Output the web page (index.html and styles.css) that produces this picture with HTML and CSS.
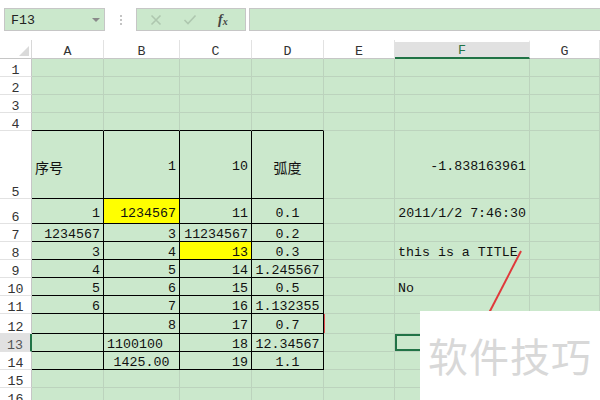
FILE: index.html
```html
<!DOCTYPE html>
<html lang="zh">
<head>
<meta charset="utf-8">
<title>Sheet</title>
<link rel="stylesheet" href="styles.css">
</head>
<body>
<div class="app">
  <div class="fbar">
    <div class="namebox"><span class="nb-text">F13</span><span class="nb-arrow"></span></div>
    <div class="sep"><i></i><i></i><i></i></div>
    <div class="fxbox">
      <svg class="ico" width="12" height="12" viewBox="0 0 12 12"><path d="M1.5 1.5 L10.5 10.5 M10.5 1.5 L1.5 10.5" stroke="#aec7af" stroke-width="1.6" fill="none"/></svg>
      <svg class="ico" width="14" height="12" viewBox="0 0 14 12"><path d="M1.5 6 L5 9.5 L12.5 1.5" stroke="#aec7af" stroke-width="1.6" fill="none"/></svg>
      <span class="fx">f<sub>x</sub></span>
    </div>
    <div class="input"></div>
  </div>

  <div class="sheet">
    <!-- header row -->
    <div class="corner"><span class="tri"></span></div>
    <div class="ch">A</div><div class="ch">B</div><div class="ch">C</div><div class="ch">D</div><div class="ch">E</div><div class="ch sel">F</div><div class="ch">G</div>

    <!-- 1-3 -->
    <div class="rh">1</div><div class="c"></div><div class="c"></div><div class="c"></div><div class="c"></div><div class="c"></div><div class="c"></div><div class="c"></div>
    <div class="rh">2</div><div class="c"></div><div class="c"></div><div class="c"></div><div class="c"></div><div class="c"></div><div class="c"></div><div class="c"></div>
    <div class="rh">3</div><div class="c"></div><div class="c"></div><div class="c"></div><div class="c"></div><div class="c"></div><div class="c"></div><div class="c"></div>
    <!-- 4 -->
    <div class="rh">4</div><div class="c bb"></div><div class="c bb"></div><div class="c bb"></div><div class="c bb"></div><div class="c"></div><div class="c"></div><div class="c"></div>
    <!-- 5 -->
    <div class="rh">5</div>
    <div class="c t cjk">序号</div>
    <div class="c t r">1</div>
    <div class="c t r">10</div>
    <div class="c t ctr cjk">弧度</div>
    <div class="c"></div>
    <div class="c r">-1.838163961</div>
    <div class="c"></div>
    <!-- 6 -->
    <div class="rh">6</div>
    <div class="c t r">1</div>
    <div class="c t r yel">1234567</div>
    <div class="c t r">11</div>
    <div class="c t ctr">0.1</div>
    <div class="c"></div>
    <div class="c r">2011/1/2 7:46:30</div>
    <div class="c"></div>
    <!-- 7 -->
    <div class="rh">7</div>
    <div class="c t r">1234567</div>
    <div class="c t r">3</div>
    <div class="c t r">11234567</div>
    <div class="c t ctr">0.2</div>
    <div class="c"></div><div class="c"></div><div class="c"></div>
    <!-- 8 -->
    <div class="rh">8</div>
    <div class="c t r">3</div>
    <div class="c t r">4</div>
    <div class="c t r yel">13</div>
    <div class="c t ctr">0.3</div>
    <div class="c"></div>
    <div class="c">this is a TITLE</div>
    <div class="c"></div>
    <!-- 9 -->
    <div class="rh">9</div>
    <div class="c t r">4</div>
    <div class="c t r">5</div>
    <div class="c t r">14</div>
    <div class="c t ctr">1.245567</div>
    <div class="c"></div><div class="c"></div><div class="c"></div>
    <!-- 10 -->
    <div class="rh">10</div>
    <div class="c t r">5</div>
    <div class="c t r">6</div>
    <div class="c t r">15</div>
    <div class="c t ctr">0.5</div>
    <div class="c"></div>
    <div class="c">No</div>
    <div class="c"></div>
    <!-- 11 -->
    <div class="rh">11</div>
    <div class="c t r">6</div>
    <div class="c t r">7</div>
    <div class="c t r">16</div>
    <div class="c t ctr">1.132355</div>
    <div class="c"></div><div class="c"></div><div class="c"></div>
    <!-- 12 -->
    <div class="rh">12</div>
    <div class="c t r"></div>
    <div class="c t r">8</div>
    <div class="c t r">17</div>
    <div class="c t ctr">0.7</div>
    <div class="c redl"></div><div class="c"></div><div class="c"></div>
    <!-- 13 -->
    <div class="rh act">13</div>
    <div class="c t"></div>
    <div class="c t">1100100</div>
    <div class="c t r">18</div>
    <div class="c t ctr">12.34567</div>
    <div class="c"></div>
    <div class="c active"></div>
    <div class="c"></div>
    <!-- 14 -->
    <div class="rh">14</div>
    <div class="c t"></div>
    <div class="c t ctr">1425.00</div>
    <div class="c t r">19</div>
    <div class="c t ctr">1.1</div>
    <div class="c"></div><div class="c"></div><div class="c"></div>
    <!-- 15, 16 -->
    <div class="rh">15</div><div class="c"></div><div class="c"></div><div class="c"></div><div class="c"></div><div class="c"></div><div class="c"></div><div class="c"></div>
    <div class="rh">16</div><div class="c"></div><div class="c"></div><div class="c"></div><div class="c"></div><div class="c"></div><div class="c"></div><div class="c"></div>
  </div>

  <svg class="arrow" width="600" height="400" viewBox="0 0 600 400"><line x1="521" y1="251" x2="489" y2="313" stroke="#e0393b" stroke-width="2"/></svg>

  <div class="watermark cjk">软件技巧</div>
</div>
</body>
</html>
```

FILE: styles.css
```css
html, body {
  margin: 0;
  padding: 0;
  background: #ffffff;
}
body {
  width: 600px;
  height: 400px;
  overflow: hidden;
  font-family: "Liberation Mono", "DejaVu Sans Mono", monospace;
  font-size: 13.3px;
  color: #111;
}
.app {
  position: relative;
  width: 600px;
  height: 400px;
  overflow: hidden;
}
.cjk {
  font-family: "Noto Sans CJK SC", "Noto Sans", sans-serif;
}

/* formula bar */
.fbar {
  height: 40px;
  box-sizing: border-box;
  padding: 8px 0 0 4px;
  display: flex;
  align-items: flex-start;
}
.namebox {
  width: 101px;
  height: 23px;
  box-sizing: border-box;
  border: 1px solid #c6c6c6;
  background: #cbe8cc;
  display: flex;
  align-items: center;
  justify-content: space-between;
  padding: 1px 4px 0 6px;
}
.nb-text {
  color: #222;
  font-size: 13.3px;
}
.nb-arrow {
  width: 0;
  height: 0;
  border-left: 4px solid transparent;
  border-right: 4px solid transparent;
  border-top: 4px solid #8a8a8a;
}
.sep {
  width: 31px;
  height: 23px;
  display: flex;
  flex-direction: column;
  align-items: center;
  justify-content: center;
  gap: 2px;
}
.sep i {
  display: block;
  width: 2px;
  height: 2px;
  background: #c4c4c4;
}
.fxbox {
  width: 110px;
  height: 23px;
  box-sizing: border-box;
  border: 1px solid #c6c6c6;
  background: #cbe8cc;
  display: flex;
  align-items: center;
  padding-left: 13px;
}
.ico {
  display: block;
}
.ico + .ico {
  margin-left: 21px;
}
.fx {
  margin-left: 21px;
  font-family: "Liberation Serif", serif;
  font-style: italic;
  font-weight: bold;
  font-size: 14px;
  color: #444;
}
.fx sub {
  font-size: 10px;
  vertical-align: -1px;
}
.input {
  flex: 1;
  margin-left: 3px;
  height: 23px;
  box-sizing: border-box;
  border: 1px solid #c6c6c6;
  border-right: none;
  background: #cbe8cc;
}

/* sheet */
.sheet {
  display: grid;
  grid-template-columns: 32px 72px 76px 72px 72px 71px 135px 70px;
  grid-template-rows: 19px 18px 18px 18px 18px 68px 25px 18px 18px 18px 18px 18px 20px 18px 18px 18px 18px;
}
.corner {
  position: relative;
  background: #fff;
  border-bottom: 1px solid #c6c6c6;
  border-right: 1px solid #d8d8d8;
}
.tri {
  position: absolute;
  right: 2px;
  bottom: 2px;
  width: 0;
  height: 0;
  border-left: 10px solid transparent;
  border-bottom: 10px solid #dadada;
}
.ch {
  background: #fff;
  border-bottom: 1px solid #c6c6c6;
  border-right: 1px solid #e2e2e2;
  box-sizing: border-box;
  display: flex;
  align-items: center;
  justify-content: center;
  color: #333;
  padding-top: 5px;
}
.ch.sel {
  background: #e1e1e1;
  border-top: 2px solid #fff;
  border-bottom: 2px solid #217346;
  color: #217346;
  padding-top: 2px;
}
.rh {
  background: #fff;
  border-bottom: 1px solid #e2e2e2;
  border-right: 1px solid #c6c6c6;
  box-sizing: border-box;
  display: flex;
  align-items: flex-end;
  justify-content: center;
  color: #333;
  line-height: 10px;
}
.rh.act {
  background: #e1e1e1;
  border-right: 2px solid #217346;
  color: #555;
}
.c {
  background: #cbe8cc;
  border-right: 1px solid #bcd3bd;
  border-bottom: 1px solid #bcd3bd;
  box-sizing: border-box;
  display: flex;
  align-items: center;
  padding: 4px 3px 0;
  white-space: nowrap;
  color: #111;
}
.c.t {
  border-right-color: #000;
  border-bottom-color: #000;
}
.c.bb {
  border-bottom-color: #000;
}
.c.r {
  justify-content: flex-end;
}
.c.ctr {
  justify-content: center;
}
.c.cjk {
  font-size: 14px;
}
.c.yel {
  background: #ffff00;
}
.c.redl {
  box-shadow: inset 1px 0 0 #e05050;
}
.c.active {
  box-shadow: inset 0 0 0 2px #217346;
}

/* overlays */
.arrow {
  position: absolute;
  left: 0;
  top: 0;
  pointer-events: none;
}
.watermark {
  position: absolute;
  left: 420px;
  top: 311px;
  width: 180px;
  height: 89px;
  background: #fff;
  color: #d8d8d8;
  font-size: 40px;
  line-height: 44px;
  padding: 22px 0 0 8px;
  box-sizing: border-box;
  white-space: nowrap;
  letter-spacing: 1px;
}
```
